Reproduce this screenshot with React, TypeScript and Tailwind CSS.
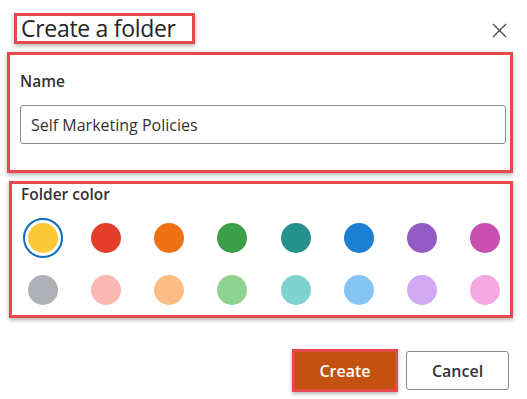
import React from "react";

const row1 = ["#fcc936", "#e43e2b", "#ed7014", "#3d9e4a", "#26918c", "#1b7fd2", "#945bc4", "#c94fb0"];
const row2 = ["#adb1b5", "#fbb8b2", "#fcbd85", "#90d292", "#7fd2ce", "#86c4f4", "#d2a8f2", "#f5a8e1"];

function Swatch({ color, selected }: { color: string; selected?: boolean }) {
    return (
        <div className="flex h-[40px] w-[40px] items-center justify-center">
            {selected ? (
                <div className="flex h-[40px] w-[40px] items-center justify-center rounded-full border-[2px] border-[#0f6cbd]">
                    <div className="h-[30px] w-[30px] rounded-full" style={{ backgroundColor: color }} />
                </div>
            ) : (
                <div className="h-[30px] w-[30px] rounded-full" style={{ backgroundColor: color }} />
            )}
        </div>
    );
}

export default function App() {
    return (
        <div
            className="h-[399px] w-[527px] overflow-hidden bg-white text-[#242424]"
            style={{ fontFamily: '"Open Sans", "Noto Sans", sans-serif' }}
        >
            {/* Header */}
            <div className="flex items-start justify-between pt-[13px] pl-[14px] pr-[20px]">
                <div className="flex h-[31px] w-[181px] items-center border-[3px] border-[#e5484d] pl-[4px] shadow-[0_2px_4px_rgba(0,0,0,0.3)]">
                    <span className="text-[23px] leading-none tracking-[-0.3px]">Create a folder</span>
                </div>
                <button className="mt-[10px] text-[#424242]">
                    <svg width="15" height="15" viewBox="0 0 15 15" fill="none" stroke="currentColor" strokeWidth="1.2">
                        <path d="M1 1L14 14M14 1L1 14" />
                    </svg>
                </button>
            </div>

            {/* Name */}
            <div className="ml-[7px] mt-[8px] h-[121px] w-[506px] border-[3px] border-[#e5484d] pl-[10px] pr-[5px] pt-[16px] shadow-[0_2px_4px_rgba(0,0,0,0.3)]">
                <div className="text-[15.5px] font-semibold leading-[20px] text-[#333]">Name</div>
                <div className="mt-[14px] flex h-[39px] w-[486px] items-center rounded-[3px] border border-[#8a8a8a] pl-[10px] text-[16px] text-[#333]">
                    Self Marketing Policies
                </div>
            </div>

            {/* Folder color */}
            <div className="ml-[9px] mt-[8px] h-[137px] w-[504px] border-[3px] border-[#e5484d] pl-[11px] pr-[5px] shadow-[0_2px_4px_rgba(0,0,0,0.3)]">
                <div className="-ml-[2px] text-[15.5px] font-semibold leading-[20px] text-[#333]">Folder color</div>
                <div className="mt-[14px] flex justify-between">
                    {row1.map((c, i) => (
                        <Swatch key={c} color={c} selected={i === 0} />
                    ))}
                </div>
                <div className="mt-[12px] flex justify-between">
                    {row2.map((c) => (
                        <Swatch key={c} color={c} />
                    ))}
                </div>
            </div>

            {/* Actions */}
            <div className="mt-[31px] flex items-center justify-end gap-[8px] pr-[18px]">
                <div className="border-[3px] border-[#e5484d] shadow-[0_2px_4px_rgba(0,0,0,0.3)]">
                    <button className="flex h-[37px] w-[100px] items-center justify-center bg-[#c4510f] text-[16px] font-semibold text-white">
                        Create
                    </button>
                </div>
                <button className="flex h-[39px] w-[103px] items-center justify-center rounded-[3px] border border-[#8a8a8a] bg-white text-[16px] font-semibold text-[#333]">
                    Cancel
                </button>
            </div>
        </div>
    );
}
